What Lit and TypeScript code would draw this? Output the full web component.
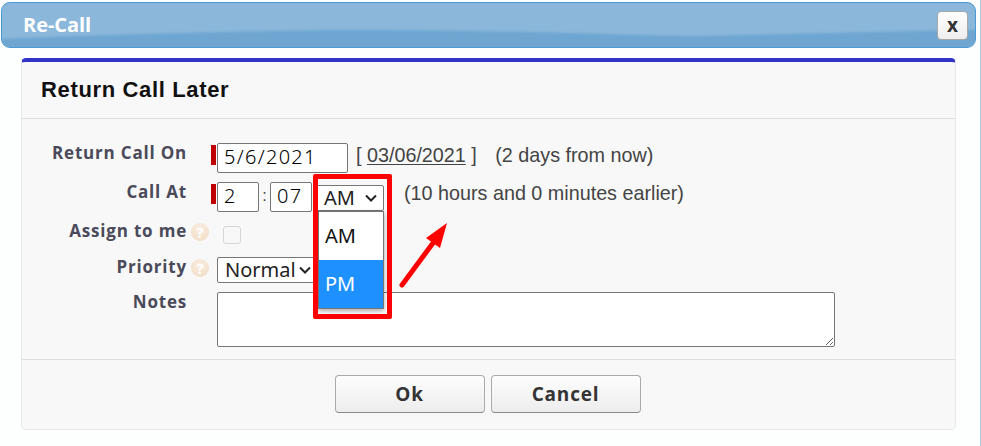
import { LitElement, html, css } from 'lit';
import { customElement } from 'lit/decorators.js';

@customElement('app-root')
export class AppRoot extends LitElement {
  static styles = css`
    :host {
      display: block;
      position: relative;
      width: 981px;
      height: 446px;
      overflow: hidden;
      background: #fdfefe;
      font-family: 'Liberation Sans', Arial, sans-serif;
      box-sizing: border-box;
      padding: 2px 0 0 1px;
    }
    .edge {
      position: absolute;
      top: 0;
      right: 0;
      width: 1px;
      height: 446px;
      background: #a3cbea;
    }
    .titlebar {
      position: relative;
      overflow: hidden;
      display: flex;
      align-items: center;
      justify-content: space-between;
      box-sizing: border-box;
      width: 975px;
      height: 46px;
      padding: 0 7px 0 21px;
      border: 1px solid #4a9ad6;
      border-radius: 9px;
      background: #8ab7da;
    }
    .wave {
      position: absolute;
      left: 0;
      top: 0;
      filter: blur(1px);
    }
    .titlebar h1 {
      position: relative;
      margin: 0 0 2px;
      color: #fff;
      font: bold 20px 'Open Sans', sans-serif;
      letter-spacing: -0.05px;
    }
    .close {
      position: relative;
      width: 31px;
      height: 29px;
      padding: 0 0 2px;
      border: 1px solid #a8a8a8;
      border-radius: 4px;
      background: linear-gradient(#fff, #eee);
      color: #333;
      font: bold 19px 'Open Sans', sans-serif;
    }
    .card {
      box-sizing: border-box;
      width: 935px;
      height: 372px;
      margin: 10px 0 0 20px;
      display: flex;
      flex-direction: column;
      background: #f8f8f8;
      border: 1px solid #e8e8e8;
      border-top: 4px solid #3333c8;
      border-radius: 5px;
    }
    .head {
      height: 57px;
      flex: none;
      box-sizing: border-box;
      padding: 11px 0 0 19px;
      border-bottom: 1px solid #dddddd;
      color: #111;
      font: bold 22px/34px 'Liberation Sans', sans-serif;
      letter-spacing: 0.65px;
    }
    .form {
      height: 241px;
      flex: none;
      box-sizing: border-box;
      padding-top: 24px;
      display: grid;
      grid-template-columns: 165px 1fr;
      grid-template-rows: 30px 30px 27px 26px 55px;
      row-gap: 9px;
      border-bottom: 1px solid #dddddd;
    }
    .label {
      display: flex;
      justify-content: flex-end;
      align-items: flex-start;
      color: #4a4a5a;
      font: bold 17px/20px 'Open Sans', sans-serif;
      letter-spacing: 0.8px;
      white-space: nowrap;
    }
    .label.help { margin-right: -24px; padding-right: 24px; }
    .field {
      display: flex;
      align-items: flex-start;
      margin-left: 24px;
      padding-left: 6px;
      position: relative;
      color: #444;
      font-size: 19.75px;
    }
    .req {
      position: absolute;
      left: 0;
      top: 2px;
      width: 5px;
      height: 20px;
      background: #c00000;
    }
    input.text {
      box-sizing: border-box;
      height: 30px;
      padding: 0 6px 4px;
      border: 1px solid #767676;
      border-radius: 2px;
      background: #fff;
      color: #000;
      font: 300 20px 'Noto Sans', sans-serif;
      letter-spacing: 1.3px;
    }
    .date { width: 131px; }
    .hh { width: 42px; }
    .mm { width: 42px; }
    .colon { width: 11px; text-align: center; line-height: 28px; font-size: 16px; }
    .note { line-height: 25px; white-space: pre; margin-left: -3px; }
    .note.later { margin: -1px 0 0 20px; }
    .note .away { margin-left: 2px; }
    .note u { text-underline-offset: 2px; }
    .select {
      box-sizing: border-box;
      display: flex;
      align-items: center;
      justify-content: space-between;
      height: 26px;
      padding: 0 5px 2px 7px;
      border: 1px solid #767676;
      border-radius: 2px;
      background: #fff;
      color: #222;
      font: 20px 'Noto Sans', sans-serif;
    }
    .select svg { flex: none; margin-top: 2px; }
    .ampm { width: 68px; margin: 3px 0 0 4px; }
    .pri { width: 100px; padding-right: 4px; }
    .check {
      box-sizing: border-box;
      width: 18px;
      height: 18px;
      margin: 5px 0 0 6px;
      border: 1px solid #d4d4d4;
      border-radius: 3px;
      background: #f8f8f8;
    }
    .hint {
      box-sizing: border-box;
      flex: none;
      width: 18px;
      height: 18px;
      margin: 2px -22px 0 4px;
      border-radius: 50%;
      background: radial-gradient(circle at 50% 35%, #faeee2, #f0d9c0);
      color: #fff;
      font: bold 15px/18px 'Open Sans', sans-serif;
      text-align: center;
      letter-spacing: 0;
    }
    textarea {
      box-sizing: border-box;
      display: block;
      width: 618px;
      height: 55px;
      border: 1px solid #767676;
      border-radius: 2px;
      background: #fff;
    }
    .foot {
      flex: 1;
      display: flex;
      justify-content: center;
      align-items: flex-start;
      gap: 6px;
      padding: 15px 2px 0 0;
    }
    .btn {
      box-sizing: border-box;
      width: 150px;
      height: 38px;
      border: 1px solid #aaa;
      border-bottom-color: #888;
      border-radius: 4px;
      background: linear-gradient(#fdfdfd, #ededed);
      color: #333;
      font: bold 19px 'Open Sans', sans-serif;
      letter-spacing: 0.8px;
    }
    .popup {
      position: absolute;
      left: 318px;
      top: 211px;
      box-sizing: border-box;
      width: 66px;
      height: 98px;
      background: #fff;
      border: 1px solid #767676;
      box-shadow: 0 2px 5px rgba(0, 0, 0, 0.35);
      color: #111;
      font: 20px 'Noto Sans', sans-serif;
    }
    .opt { height: 48px; padding-left: 6px; line-height: 47px; box-sizing: border-box; }
    .opt.on { background: #1e90ff; color: #fff; }
    .mark {
      position: absolute;
      left: 313px;
      top: 174px;
      box-sizing: border-box;
      width: 79px;
      height: 145px;
      border: 5px solid #ff0000;
      border-radius: 2px;
    }
    .arrow { position: absolute; left: 395px; top: 218px; }
  `;

  private _chevron() {
    return html`<svg width="14" height="9" viewBox="0 0 14 9">
      <path d="M2 1.5 L7 6.5 L12 1.5" fill="none" stroke="#222" stroke-width="2" />
    </svg>`;
  }

  render() {
    return html`
      <div class="edge"></div>
      <div class="titlebar">
        <svg class="wave" width="975" height="46" viewBox="0 0 975 46">
          <path d="M-5 36 C100 32 250 28 330 27 C500 26 650 34 700 33 C800 31 900 28 980 27 L980 50 L-5 50 Z" fill="#6ea6d1" />
        </svg>
        <h1>Re-Call</h1>
        <button class="close">x</button>
      </div>
      <section class="card">
        <div class="head">Return Call Later</div>
        <div class="form">
          <div class="label">Return Call On</div>
          <div class="field">
            <span class="req"></span>
            <input class="text date" .value=${'5/6/2021'} />
            <span class="note">  [ <u>03/06/2021</u> ]   <span class="away">(2 days from now)</span></span>
          </div>

          <div class="label">Call At</div>
          <div class="field">
            <span class="req"></span>
            <input class="text hh" .value=${'2'} />
            <span class="colon">:</span>
            <input class="text mm" .value=${'07'} />
            <div class="select ampm">AM ${this._chevron()}</div>
            <span class="note later">(10 hours and 0 minutes earlier)</span>
          </div>

          <div class="label help">Assign to me<span class="hint">?</span></div>
          <div class="field"><span class="check"></span></div>

          <div class="label help">Priority<span class="hint">?</span></div>
          <div class="field"><div class="select pri">Normal ${this._chevron()}</div></div>

          <div class="label">Notes</div>
          <div class="field"><textarea></textarea></div>
        </div>
        <div class="foot">
          <button class="btn">Ok</button>
          <button class="btn">Cancel</button>
        </div>
      </section>

      <div class="popup">
        <div class="opt">AM</div>
        <div class="opt on">PM</div>
      </div>
      <div class="mark"></div>
      <svg class="arrow" width="60" height="75" viewBox="0 0 60 75">
        <path d="M7 67 L38 25" stroke="#ff0000" stroke-width="5" stroke-linecap="round" />
        <path d="M52 5 L45 30 L31 20 Z" fill="#ff0000" />
      </svg>
    `;
  }
}
